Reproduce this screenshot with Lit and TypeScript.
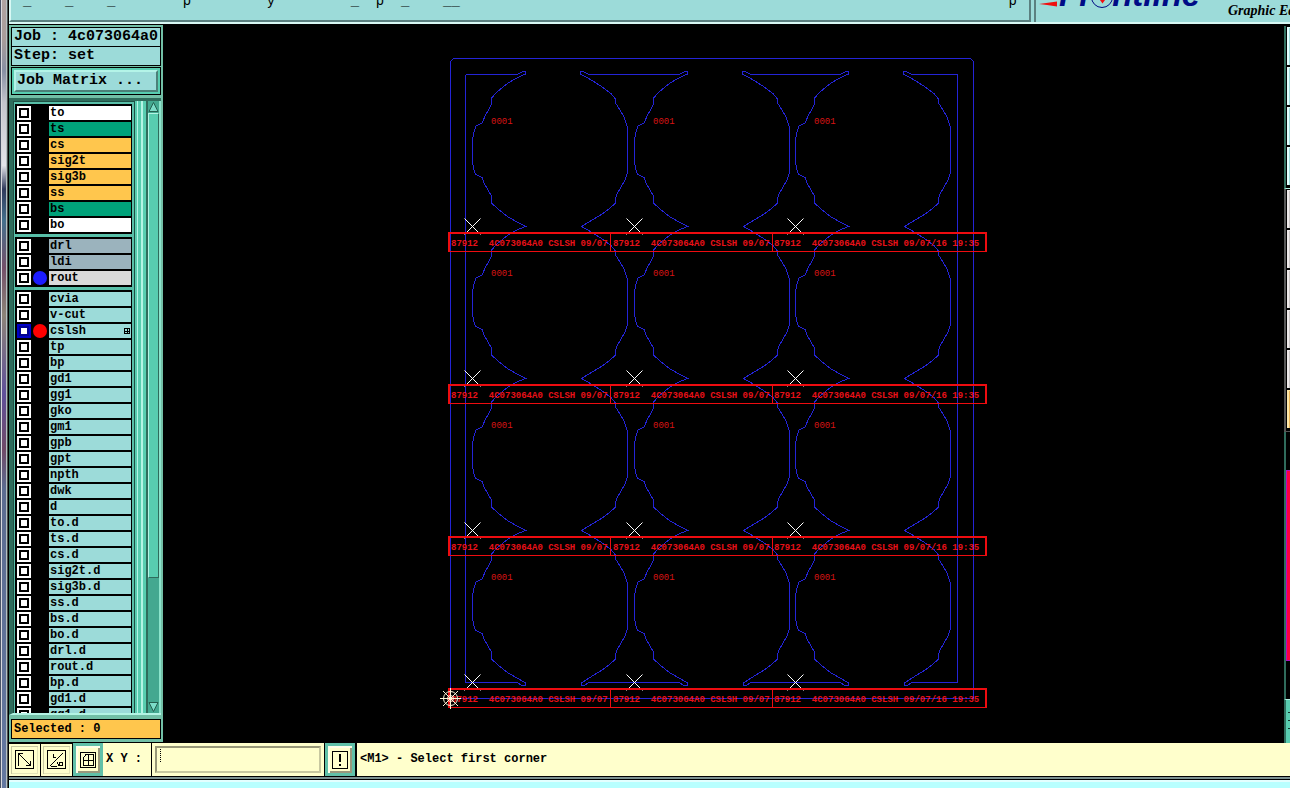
import { LitElement, html, svg, css } from "lit";
import { customElement, state } from "lit/decorators.js";
import { classMap } from "lit/directives/class-map.js";

type Layer = { name: string; tone: string; dot?: string; active?: boolean };

const layer = (tone: string) => (name: string): Layer => ({ name, tone });

const GROUPS: Layer[][] = [
  [
    { name: "to", tone: "white" },
    { name: "ts", tone: "green" },
    { name: "cs", tone: "amber" },
    { name: "sig2t", tone: "amber" },
    { name: "sig3b", tone: "amber" },
    { name: "ss", tone: "amber" },
    { name: "bs", tone: "green" },
    { name: "bo", tone: "white" },
  ],
  [
    { name: "drl", tone: "slate" },
    { name: "ldi", tone: "slate" },
    { name: "rout", tone: "grey", dot: "blue" },
  ],
  [
    ...["cvia", "v-cut"].map(layer("aqua")),
    { name: "cslsh", tone: "aqua", dot: "red", active: true },
    ...[
      "tp", "bp", "gd1", "gg1", "gko", "gm1", "gpb", "gpt", "npth", "dwk", "d",
      "to.d", "ts.d", "cs.d", "sig2t.d", "sig3b.d", "ss.d", "bs.d", "bo.d",
      "drl.d", "rout.d", "bp.d", "gd1.d", "gg1.d",
    ].map(layer("aqua")),
  ],
];

@customElement("layer-list")
class LayerList extends LitElement {
  static styles = css`
    :host { display: flex; flex-direction: column; gap: 3px; }
    .group { display: block; border: 1px solid #000; background: #000; }
    .row { display: grid; grid-template-columns: 15px 18px 1fr; height: 16px; align-items: center; }
    .tick { appearance: none; box-sizing: border-box; width: 14px; height: 14px; margin: 0 0 0 1px; background: #fff; border: 2px solid #fff; box-shadow: inset 0 0 0 2px #000; }
    .tick.active { border-color: #0000c8; box-shadow: inset 0 0 0 2px #000090; }
    .dot { width: 14px; height: 14px; border-radius: 50%; margin-left: 2px; }
    .blue { background: #1c1cff; }
    .red { background: #ff0000; }
    .name { display: flex; justify-content: space-between; align-items: center; height: 14px; line-height: 14px; padding: 0 1px; font-weight: bold; color: #000; }
    .white { background: #fff; }
    .green { background: #00a27a; }
    .amber { background: #ffc64d; }
    .slate { background: #9bb3bd; }
    .grey { background: #dadada; }
    .aqua { background: #9cdbd9; }
    .mark { display: block; }
  `;

  render() {
    return GROUPS.map((group) => html`<div class="group">${group.map((l) => html`
      <div class="row">
        <input class=${classMap({ tick: true, active: !!l.active })} type="checkbox" id=${"layer-" + l.name} />
        <span class=${classMap({ dot: true, [l.dot ?? "none"]: true })}></span>
        <label class="name ${l.tone}" for=${"layer-" + l.name}>${l.name}${l.active
          ? html`<svg class="mark" width="6" height="6" viewBox="0 0 6 6" shape-rendering="crispEdges"><path d="M.5 .5h5v5h-5zM3 1v5M1 3h5" fill="none" stroke="#000" /></svg>`
          : ""}</label>
      </div>`)}</div>`);
  }
}

const COLS = [0, 162, 323];
const ROWS = [0, 152, 304, 456];
const LAST_ROW = ROWS.length - 1;

const LEFT_ARC: number[][] = [
  [517, 78], [508, 83], [503, 87], [497, 92], [492, 97.5], [491.5, 104], [488, 111], [486, 114],
  [482, 123], [478, 125], [476, 126], [474, 132], [472.5, 140], [472.5, 162], [474, 170], [475.5, 174],
  [478, 175.5], [482, 177.5], [484, 183], [491.5, 196], [491.5, 203], [498, 209], [508, 217], [518, 222.5],
];
const RIGHT_ARC: number[][] = [
  [586, 77], [593, 81], [603, 87.5], [611, 93.5], [615.5, 99], [615.5, 103], [620, 110], [624.5, 118],
  [626, 123], [627.5, 127], [627.5, 173], [624.5, 181], [617, 194], [615.5, 198], [615.5, 203],
  [609, 209], [603, 213.5], [593, 219.5],
];

const run = (points: number[][], dy: number) => points.map(([x, y]) => `${x} ${y + dy}`).join("L");
const chain = (points: number[][], tipX: number) =>
  ROWS.map((dy, r) => run(points, dy) + (r < LAST_ROW ? `L${tipX} ${226.5 + dy}L` : "")).join("");

const LEFT_PATH = "M517 74.5L522 72L525.5 71.5V74L" + chain(LEFT_ARC, 525.5) + "L525.5 683V685.5H522L517 682.5";
const RIGHT_PATH = "M589 74.5L584 72L580.5 71.5V74L" + chain(RIGHT_ARC, 581.5) + "L581.5 683V685.5H584L589 682.5";

@customElement("board-view")
class BoardView extends LitElement {
  static styles = css`
    :host { display: block; background: #000; overflow: hidden; }
    .board { display: block; width: 100%; height: 100%; }
    .rout { fill: none; stroke: #2424d6; stroke-width: 1; }
    .frame { fill: none; stroke: #ee0c10; }
    .legend { font: bold 9px "Liberation Mono", monospace; fill: #e81018; white-space: pre; }
    .serial { font: 9px "Liberation Mono", monospace; fill: #d81414; }
    .cross { stroke: #fff; fill: none; }
    .origin { stroke: #fff4d8; fill: none; }
  `;

  render() {
    const levels = [74.5, 682.5];
    return html`<svg class="board" viewBox="163 25 1121 718" role="img" aria-label="Panel layout">
      <g class="rout" shape-rendering="crispEdges">
        <path d="M450.5 698.5V61.5L453.5 58.5H970.5L973.5 61.5V698.5Z" />
        <path d="M465.5 74.5V682.5M957.5 74.5V682.5" />
        ${levels.map((y) => svg`<path d="M465.5 ${y}H517M589 ${y}H679M751 ${y}H840M912 ${y}H957.5" />`)}
        ${COLS.map((dx) => svg`<g transform="translate(${dx} 0)"><path d=${LEFT_PATH} /><path d=${RIGHT_PATH} /></g>`)}
      </g>
      ${ROWS.map((dy) => COLS.map((dx, c) => svg`<g transform="translate(${dx} ${dy})">
        <text class="serial" x="491" y="124">0001</text>
        <text class="legend" x="451" y="246">${"87912  4C073064A0 CSLSH 09/07" + (c === COLS.length - 1 ? "/16 19:35" : "")}</text>
        <path class="cross" d="M464.5 218.5L480.5 234.5M480.5 218.5L464.5 234.5" />
      </g>`))}
      ${ROWS.map((dy) => svg`<g class="frame" transform="translate(0 ${dy})" shape-rendering="crispEdges">
        <path d="M449 251.5V233H986V251.5" stroke-width="2" />
        <path d="M448 251.5H987M610.5 233V251M772.5 233V251" />
      </g>`)}
      <g class="origin">
        <circle cx="450.5" cy="698.5" r="7" />
        <circle cx="450.5" cy="698.5" r="3" />
        <path d="M440 698.5H461M450.5 688V709M443 691L458 706M458 691L443 706" />
      </g>
    </svg>`;
  }
}

@customElement("app-root")
class AppRoot extends LitElement {
  static styles = css`
    :host { display: grid; grid-template-columns: 8px 1fr; height: 100vh; overflow: hidden; background: #000; font: bold 12px/14px "Liberation Mono", monospace; color: #000; }
    * { box-sizing: border-box; }
    .desk { border-left: 1px solid #4a5468; border-right: 1px solid #4c5450; box-shadow: inset 1px 0 #d8d8dc, inset -1px 0 #b8c0c4; background: linear-gradient(#b0a4a2 0, #a89c9a 5%, #8890a4 9%, #c4c4cc 13%, #e4e4ea 21%, #303a5c 24%, #45708c 28%, #74506a 34%, #8c8478 40%, #60509a 50%, #704a68 57%, #5c6c90 62%, #6478a0 100%); }
    .main { display: flex; flex-direction: column; min-width: 0; min-height: 0; border-left: 1px solid #000; }
    .top { display: flex; height: 24px; flex: none; overflow: hidden; background: #9cdbd9; border-bottom: 2px solid #d8f8f4; }
    .title { flex: 1; min-width: 0; display: flex; align-items: flex-start; justify-content: space-between; height: 22px; overflow: hidden; border: solid #5b8080; border-width: 0 2px 2px 0; border-left: 2px solid #d8f8f4; padding: 0 12px; font-weight: normal; font-size: 14px; line-height: 2px; white-space: pre; }
    .brand { display: flex; justify-content: space-between; width: 256px; flex: none; margin-left: 3px; border-left: 2px solid #5b8080; overflow: hidden; }
    .logo { display: block; flex: none; overflow: hidden; }
    .word { font: italic bold 33px "Liberation Sans", sans-serif; fill: #000c86; }
    .product { flex: none; width: 62px; white-space: nowrap; font: italic bold 14px/22px "Liberation Serif", serif; }
    .work { display: flex; flex: 1; min-height: 0; border-top: 1px solid #000; }
    .side { display: flex; flex-direction: column; width: 154px; flex: none; background: #72bfa6; border-bottom: 1px solid #000; }
    .info { margin: 2px 2px 0; border: 1px solid #000; background: #9cdbd9; font-size: 15px; line-height: 18px; font-weight: bold; }
    .line { padding: 0 2px; white-space: nowrap; height: 18px; overflow: hidden; }
    .line + .line { border-top: 1px solid #000; height: 19px; }
    .matrix { margin: 1px 2px 3px; border: 1px solid #000; padding: 2px; background: #58cdb0; }
    .matrix button { display: block; width: 100%; height: 22px; padding: 0 1px; text-align: left; font: bold 15px/18px "Liberation Mono", monospace; color: #000; background: #9cdbd9; border: 2px solid; border-color: #b4f4e8 #4c8078 #4c8078 #b4f4e8; }
    .panel { display: flex; flex: 1; min-height: 0; margin-right: 2px; border: solid #2f6c5c; border-width: 3px 0 0 4px; border-bottom: 2px solid #b4f4e4; background: #58cdb0; }
    .layers { width: 122px; flex: none; overflow: hidden; padding: 2px 2px 0 1px; border: solid #205044; border-width: 1px 1px 0 1px; background: #58bfa8; }
    .edge { flex: 1; background: linear-gradient(90deg, #58cdb0 0 2px, #b4f4e4 2px 3px, #58cdb0 3px 6px, #b4f4e4 6px 8px, #58cdb0 8px); }
    .scroll { display: flex; flex-direction: column; width: 15px; flex: none; background: #44a890; border-left: 2px solid #2f6c5c; border-right: 2px solid #8ce4cc; }
    .thumb { flex: none; height: 76%; background: #58cdb0; border: 1px solid; border-color: #b4f4e4 #2f6c5c #2f6c5c #b4f4e4; }
    .gap { flex: 1; }
    .arrow { flex: none; display: block; }
    .selected { margin: 4px 2px 3px; border: 1px solid #000; background: #ffc64d; height: 20px; line-height: 18px; padding: 0 2px; }
    .view { flex: 1; min-width: 0; }
    .tools { display: flex; flex-direction: column; width: 6px; flex: none; padding-top: 1px; overflow: hidden; }
    .stack { border-left: 2px solid #2f6c5c; border-bottom: 1px solid #b4f4e4; padding-bottom: 2px; }
    .stack.dim { border-color: #555; }
    .tool { display: block; width: 100%; height: 40px; padding: 0; border: solid #000; border-width: 1px 0 1px 1px; background: #9cdbd9; box-shadow: inset 2px 1px #e4ffff; }
    .dim .tool { background: #c8c4c4; box-shadow: inset 2px 1px #eeeaea; }
    .dim .tool.warm { background: #e8b458; box-shadow: inset 2px 1px #ffe8a8; }
    .meter { flex: 1; display: flex; border-left: 2px solid #2f6c5c; padding: 38px 0; }
    .level { flex: 1; background: #ff003c; border: solid #b010c0; border-width: 1px 0 1px 1px; }
    .foot-tool { height: 44px; flex: none; border-left: 2px solid #2f6c5c; border-top: 1px solid #b4f4e4; background: #58cdb0; padding: 12px 0 0 2px; display: grid; align-content: start; gap: 7px; }
    .foot-tool i { height: 1px; background: #14342c; }
    .bar { display: flex; flex: none; height: 33px; background: #ffffcc; }
    .key { width: 32px; flex: none; display: grid; place-items: center; padding: 0; color: #000; background: #ffffcc; border: solid #000; border-width: 1px 1px 0 0; box-shadow: inset 0 0 0 2px #ffffcc, inset 3px 3px #c8c8a0, inset -3px -3px #e4e4b8; }
    .key.on { border: 3px solid #60c0a8; width: 30px; box-shadow: inset 2px 2px #ffffe8, inset -2px -2px #98987c; }
    .key svg { display: block; }
    .xy { width: 48px; flex: none; padding-left: 3px; line-height: 32px; font-weight: bold; }
    .entry { width: 174px; flex: none; border: solid #000; border-width: 0 1px; padding: 2px; display: flex; }
    .entry input { flex: 1; min-width: 0; width: 100%; background: repeating-linear-gradient(#000 0 1px, #ffffcc 1px 2px) 3px 1px / 1px 14px no-repeat #ffffcc; border: 2px solid; border-color: #989878 #c8c8a0 #c8c8a0 #989878; padding: 0 6px; margin: 1px; font: inherit; outline: none; }
    .message { flex: 1; padding-left: 3px; line-height: 32px; border-left: 2px solid #000; white-space: nowrap; }
    .base { flex: none; height: 12px; border-top: 1px solid #000; background: #b8ffff; box-shadow: inset 0 2px #7c9090, inset 0 3px #000, inset 0 5px #e4ffff; }
  `;

  @state() private coord = "";

  private arrow(d: string) {
    return html`<svg class="arrow" width="11" height="12" viewBox="0 0 11 12"><path d=${d} fill="#7cdcc8" stroke="#246050" /></svg>`;
  }

  private key(name: string, on: boolean, art: unknown) {
    return html`<button class=${classMap({ key: true, on })} aria-label=${name}>
      <svg width="20" height="20" viewBox="0 0 20 20" fill="none" stroke="#000" shape-rendering="crispEdges">${art}</svg>
    </button>`;
  }

  render() {
    return html`
      <div class="desk"></div>
      <div class="main">
        <header class="top">
          <div class="title"><span>_    _    _        p         y         _  p  _    __</span><span>p</span></div>
          <div class="brand">
            <svg class="logo" width="166" height="22" viewBox="1038 0 166 22">
              <path d="M1041 4L1059 1.5V6.5L1049 5Z" fill="#f01010" />
              <text class="word" x="1061" y="6">Frontline</text>
              <circle cx="1104" cy="-3" r="10.5" fill="#9cdbd9" stroke="#000c86" />
              <path d="M1102 0H1107L1104.500 3.500Z" fill="#f01010" />
            </svg>
            <span class="product">Graphic Editor</span>
          </div>
        </header>
        <div class="work">
          <aside class="side">
            <div class="info">
              <div class="line">Job : 4c073064a0</div>
              <div class="line">Step: set</div>
            </div>
            <div class="matrix"><button>Job Matrix ...</button></div>
            <div class="panel">
              <div class="layers"><layer-list></layer-list></div>
              <div class="edge"></div>
              <div class="scroll">
                ${this.arrow("M5.500 1.500L10 10.500H1Z")}
                <div class="thumb"></div>
                <div class="gap"></div>
                ${this.arrow("M5.500 10.500L10 1.500H1Z")}
              </div>
            </div>
            <div class="selected">Selected : 0</div>
          </aside>
          <board-view class="view"></board-view>
          <div class="tools">
            <div class="stack">${["Zoom", "Pan", "Home", "Fit"].map((n) => html`<button class="tool" aria-label=${n}></button>`)}</div>
            <div class="stack dim">
              ${["Snap", "Grid", "Measure", "Filter", "Select"].map((n) => html`<button class="tool" aria-label=${n}></button>`)}
              <button class="tool warm" aria-label="Highlight"></button>
            </div>
            <div class="meter"><div class="level"></div></div>
            <div class="foot-tool"><i></i><i></i><i></i></div>
          </div>
        </div>
        <footer class="bar">
          ${this.key("Distance", false, svg`<path d="M.5 .5H18.5V18.500H.5ZM4 4L15 15M3.500 8V3.500H8M15.500 11V15.500H11M3.500 8V16" />`)}
          ${this.key("Angle", false, svg`<path d="M.5 .5H18.5V18.500H.5ZM3 16L16 3M4 16.500H10M6.500 4V7.500H9M10 12L12 16M12.500 12.500H15.500V15.500H12.500Z" />`)}
          ${this.key("Grid", true, svg`<path d="M2.500 2.500H17.500V17.500H2.500ZM5.500 15.500V7.500L8 4.500H15.500V15.500ZM5.500 10.500H15.500M10.500 4.500V15.500" />`)}
          <label class="xy" for="coord">X Y :</label>
          <div class="entry">
            <input id="coord" .value=${this.coord} @input=${(e: Event) => (this.coord = (e.target as HTMLInputElement).value)} />
          </div>
          ${this.key("Alert", true, svg`<path d="M2.500 1.500H17.500V18.500H2.500Z" /><path d="M10 4V12M10 14V16" stroke-width="2" />`)}
          <div class="message">&lt;M1&gt; - Select first corner</div>
        </footer>
        <div class="base"></div>
      </div>
    `;
  }
}
